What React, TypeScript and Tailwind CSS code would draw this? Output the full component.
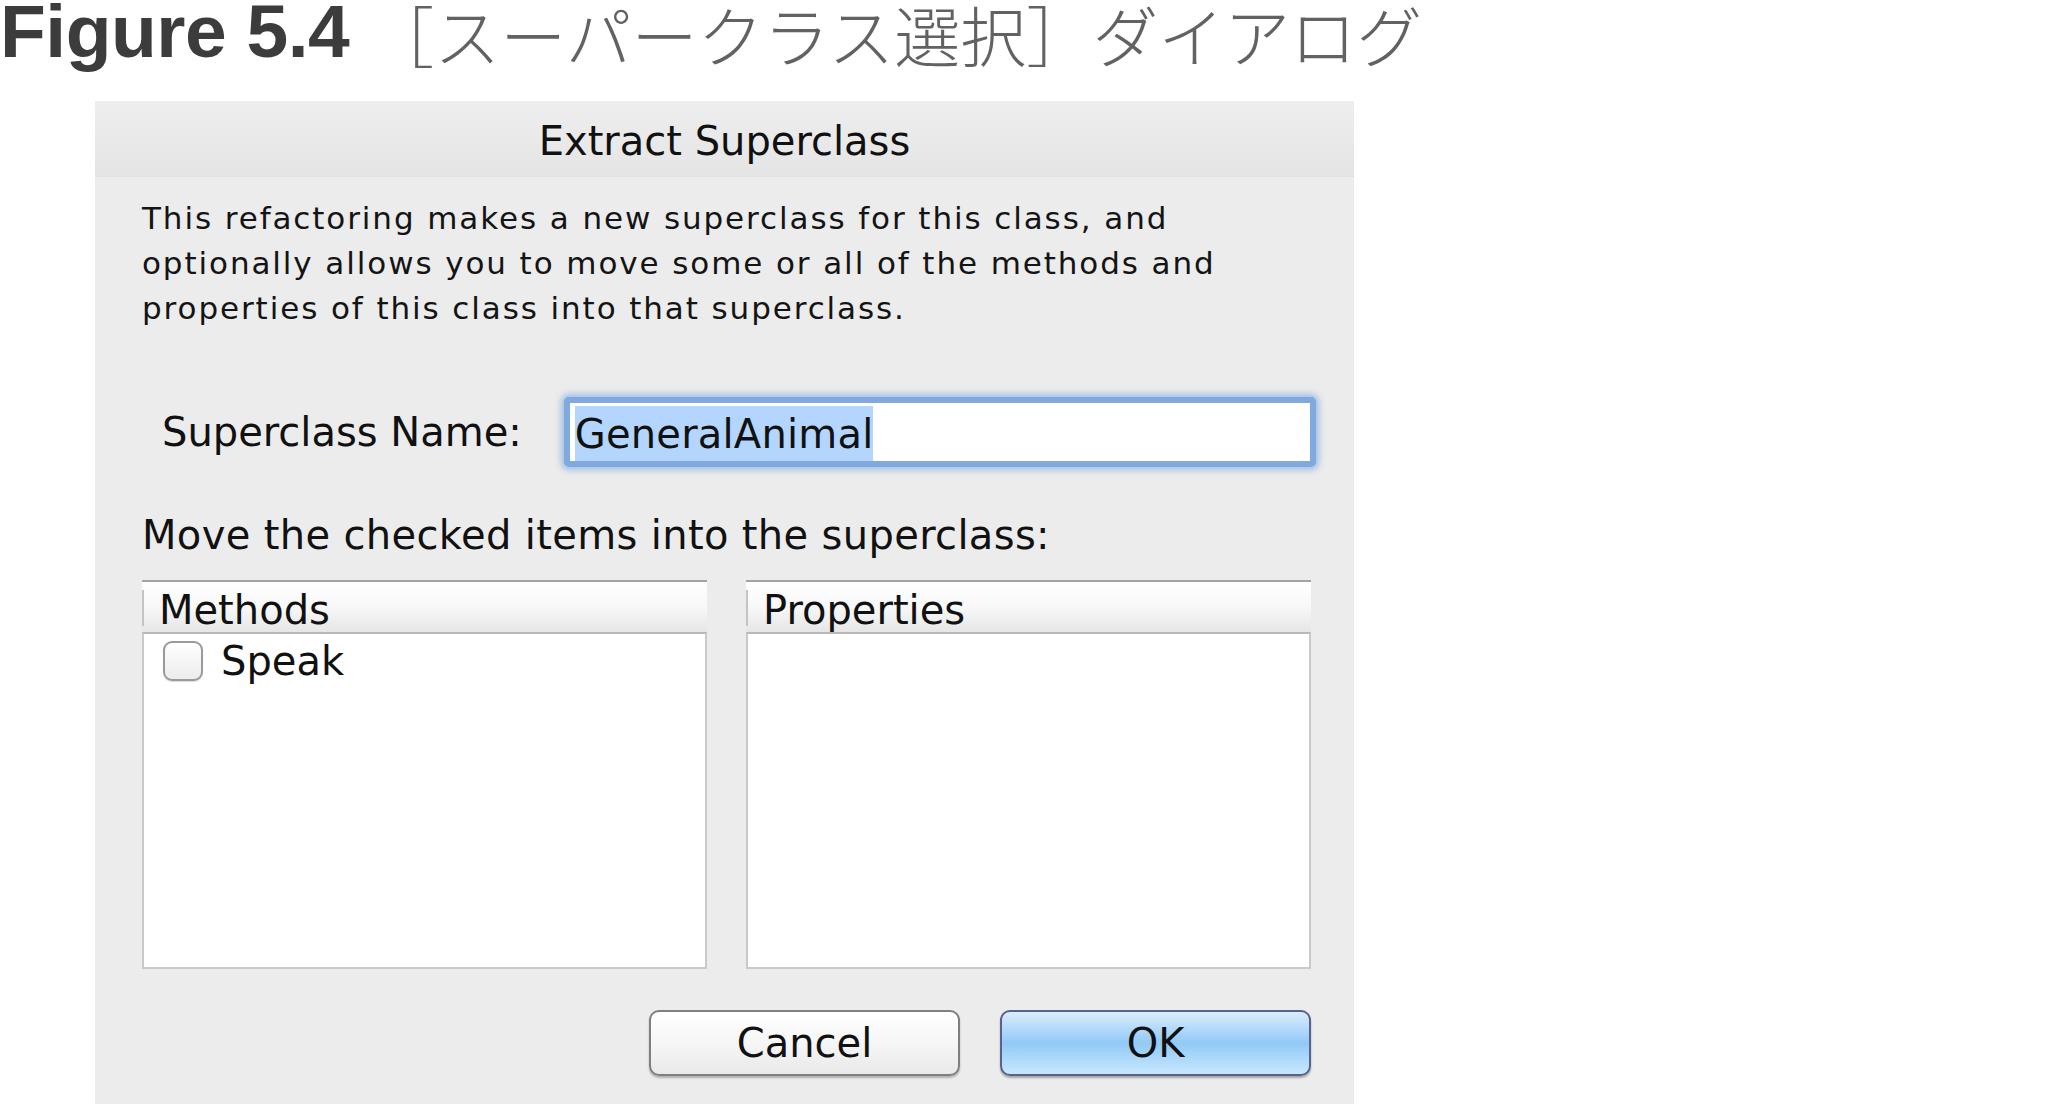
import { useState } from "react";

const Header = () => {
  return (
    <div className="flex flex-row items-start h-[101px]">
      <h1 className="font-['Liberation_Sans',Arial,sans-serif] font-bold text-[75px] leading-[62px] text-[#3c3c3c] tracking-[-0.5px]">
        Figure 5.4
      </h1>
      <span className="font-['Noto_Sans_CJK_JP',sans-serif] font-light text-[66px] leading-[66px] text-[#626262] ml-[19px]">
        ［スーパークラス選択］ダイアログ
      </span>
    </div>
  );
};

const ListBox = ({ title, items }: { title: string; items: string[] }) => {
  const [checked, setChecked] = useState<Record<string, boolean>>({});

  return (
    <div className="flex flex-col w-[565px] h-[389px]">
      <div className="h-[52px] border-t-2 border-[#a3a3a3] bg-gradient-to-b from-[#ffffff] via-[#f8f8f8] to-[#e6e6e6] flex flex-row items-center">
        <div className="w-[2px] h-[36px] bg-[#c4c4c4] mt-[2px]" />
        <span className="ml-[15px] text-[40px] leading-none text-[#111] mt-[6px]">{title}</span>
      </div>
      <div className="flex-1 bg-white border-2 border-[#c9c9c9] border-t-[#b8b8b8]">
        {items.map((item) => (
          <label key={item} className="flex flex-row items-center h-[46px] pl-[19px] mt-[4px]">
            <button
              onClick={() => setChecked({ ...checked, [item]: !checked[item] })}
              className="w-[40px] h-[40px] rounded-[9px] border-2 border-[#9a9a9a] bg-gradient-to-b from-[#ffffff] to-[#ececec] shadow-[0_1px_1px_rgba(0,0,0,0.15)] flex items-center justify-center text-[26px] text-[#333]"
            >
              {checked[item] ? "✓" : ""}
            </button>
            <span className="ml-[18px] text-[40px] leading-none text-[#111]">{item}</span>
          </label>
        ))}
      </div>
    </div>
  );
};

export default function App() {
  const [name, setName] = useState("GeneralAnimal");

  return (
    <div className="w-[2048px] h-[1104px] bg-white overflow-hidden">
      <Header />
      <div className="ml-[95px] w-[1259px] h-[1003px] bg-[#ececec] flex flex-col font-['DejaVu_Sans',sans-serif] text-[#111]">
        <div className="h-[76px] flex items-center justify-center bg-gradient-to-b from-[#eeeeee] to-[#e5e5e5] border-b border-[#e0e0e0]">
          <span className="text-[40px] leading-none mt-[4px]">Extract Superclass</span>
        </div>

        <p className="mt-[19px] ml-[47px] w-[1140px] text-[31px] leading-[45px] tracking-[1.9px] text-[#141414]">
          This refactoring makes a new superclass for this class, and
          <br />
          optionally allows you to move some or all of the methods and
          <br />
          properties of this class into that superclass.
        </p>

        <div className="mt-[66px] h-[70px] flex flex-row items-center">
          <span className="ml-[67px] text-[40px]">Superclass Name:</span>
          <div className="ml-[42px] w-[752px] h-[70px] rounded-[5px] border-[6px] border-[#80aade] shadow-[0_0_6px_3px_rgba(120,165,225,0.65)] bg-white flex items-center">
            <div className="ml-[5px] mt-[3px] self-stretch flex items-center bg-[#b4d5fe]">
              <span className="text-[40px] leading-none tracking-[0.2px]">{name}</span>
            </div>
            <input
              value=""
              onChange={(e) => setName(name + e.target.value)}
              className="flex-1 h-full outline-none bg-transparent"
            />
          </div>
        </div>

        <div className="mt-[45px] ml-[47px] text-[40px] leading-[46px] tracking-[0.35px]">
          Move the checked items into the superclass:
        </div>

        <div className="mt-[22px] ml-[47px] w-[1169px] flex flex-row justify-between">
          <ListBox title="Methods" items={["Speak"]} />
          <ListBox title="Properties" items={[]} />
        </div>

        <div className="mt-[41px] ml-[554px] flex flex-row gap-[40px]">
          <button className="w-[311px] h-[66px] rounded-[10px] border-2 border-[#7f7f7f] bg-gradient-to-b from-[#ffffff] via-[#f6f6f6] to-[#e9e9e9] shadow-[0_2px_2px_rgba(0,0,0,0.25)] text-[40px] leading-none text-[#111]">
            Cancel
          </button>
          <button className="w-[311px] h-[66px] rounded-[10px] border-2 border-[#56628f] bg-gradient-to-b from-[#d9edfd] via-[#92c9f6] to-[#c8e8fe] shadow-[0_2px_2px_rgba(0,0,0,0.3)] text-[40px] leading-none text-[#111]">
            OK
          </button>
        </div>
      </div>
    </div>
  );
}
